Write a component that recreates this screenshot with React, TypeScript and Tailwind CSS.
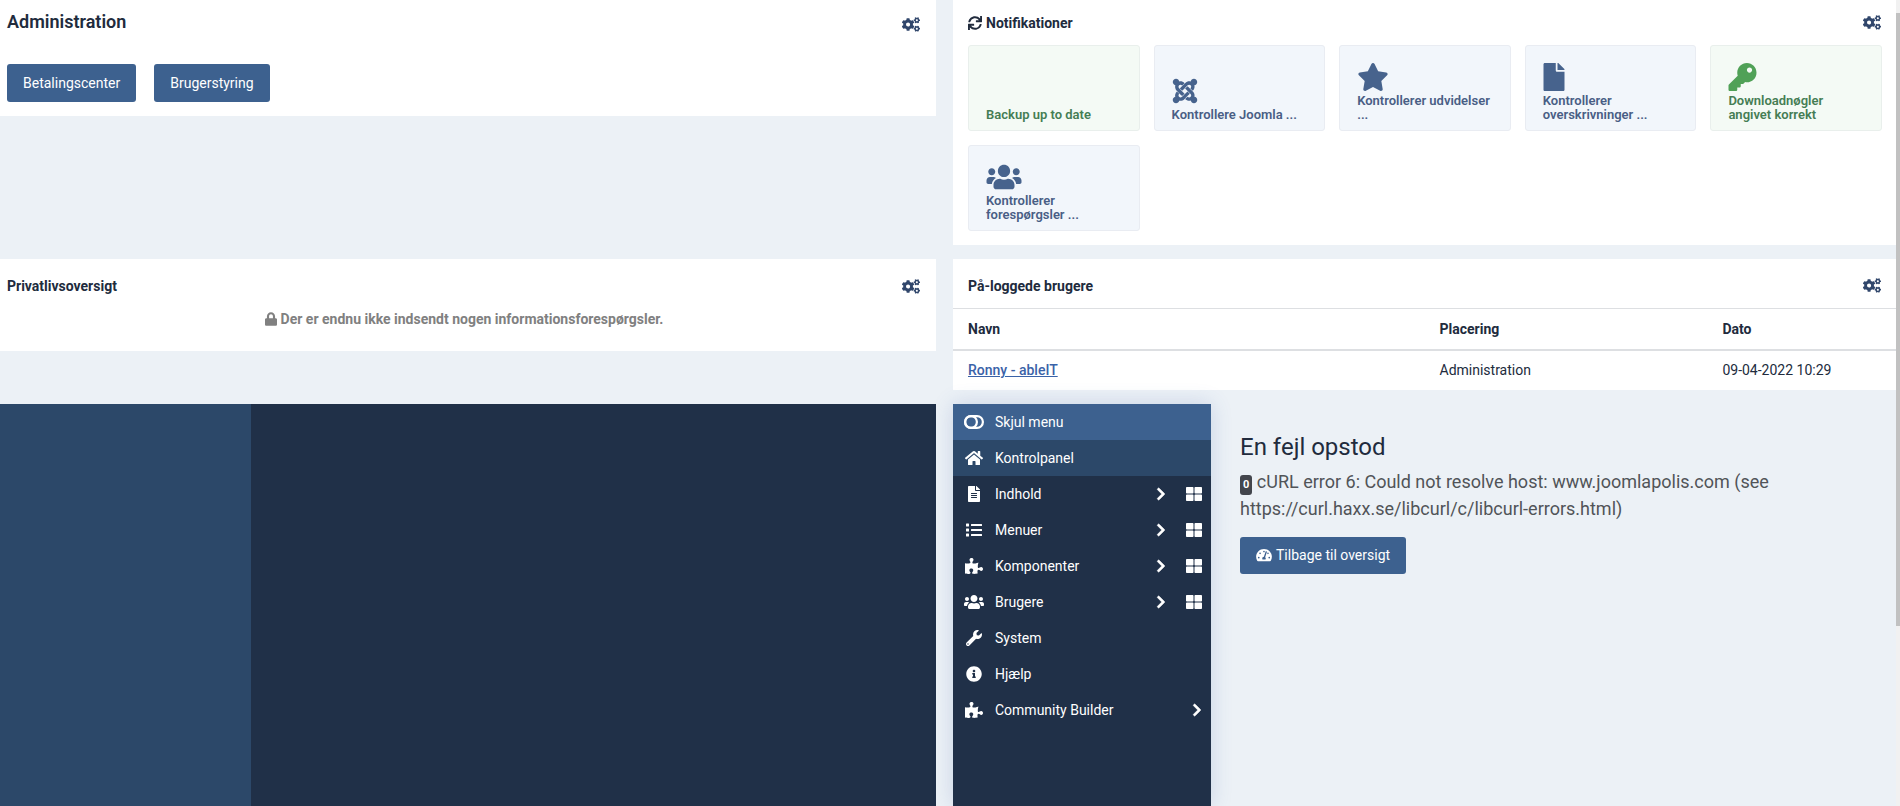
import React, { type ComponentType, type ReactNode } from "react";
import {
  FaChevronRight,
  FaCogs,
  FaFile,
  FaFileAlt,
  FaHome,
  FaInfoCircle,
  FaJoomla,
  FaKey,
  FaList,
  FaLock,
  FaPuzzlePiece,
  FaStar,
  FaSync,
  FaTachometerAlt,
  FaThLarge,
  FaUsers,
  FaWrench,
} from "react-icons/fa";

type Icon = ComponentType<{ className?: string }>;

function ToggleIcon({ className }: { className?: string }) {
  return (
    <svg viewBox="0 0 20 14" fill="none" stroke="currentColor" strokeWidth="2.2" className={className} aria-hidden="true">
      <rect x="1.1" y="1.1" width="17.8" height="11.8" rx="5.9" />
      <circle cx="7" cy="7" r="5.9" />
    </svg>
  );
}

function SettingsButton() {
  return (
    <button type="button" aria-label="Indstillinger" className="text-[#30466b]">
      <FaCogs className="h-[15px] w-[18px]" />
    </button>
  );
}

function Card({ className, children }: { className?: string; children: ReactNode }) {
  return <section className={`self-start bg-white ${className ?? ""}`}>{children}</section>;
}

type Tile = { label: string; icon?: Icon; size?: string; ok?: boolean };

const tiles: Tile[] = [
  { label: "Backup up to date", ok: true },
  { label: "Kontrollere Joomla ...", icon: FaJoomla, size: "h-7 w-[26px]" },
  { label: "Kontrollerer udvidelser ...", icon: FaStar, size: "h-7 w-8" },
  { label: "Kontrollerer overskrivninger ...", icon: FaFile, size: "h-7 w-[22px]" },
  { label: "Downloadnøgler angivet korrekt", icon: FaKey, size: "h-7 w-[29px]", ok: true },
  { label: "Kontrollerer forespørgsler ...", icon: FaUsers, size: "h-7 w-9" },
];

function NotificationTile({ label, icon: TileIcon, size, ok }: Tile) {
  return (
    <a
      href="#"
      className={`flex h-[86px] flex-col justify-end rounded-[3px] border px-[17px] pb-2 text-[13px] leading-[14px] font-semibold ${
        ok ? "border-[#e9efec] bg-[#f4faf5] text-[#457d54]" : "border-[#e9ecf2] bg-[#f2f6fb] text-[#495e85]"
      }`}
    >
      {TileIcon && <TileIcon className={`mb-[3px] ${size} ${ok ? "text-[#50a157]" : "text-[#47638d]"}`} />}
      <span>{label}</span>
    </a>
  );
}

type MenuEntry = { label: string; icon: Icon; size: string; arrow?: boolean; dashboard?: boolean; tone?: string };

const menu: MenuEntry[] = [
  { label: "Skjul menu", icon: ToggleIcon, size: "h-[14px] w-5", tone: "bg-[#3d618f]" },
  { label: "Kontrolpanel", icon: FaHome, size: "h-4 w-[18px]", tone: "bg-[#2c4869]" },
  { label: "Indhold", icon: FaFileAlt, size: "h-4 w-3", arrow: true, dashboard: true },
  { label: "Menuer", icon: FaList, size: "size-4", arrow: true, dashboard: true },
  { label: "Komponenter", icon: FaPuzzlePiece, size: "h-4 w-[18px]", arrow: true, dashboard: true },
  { label: "Brugere", icon: FaUsers, size: "h-4 w-5", arrow: true, dashboard: true },
  { label: "System", icon: FaWrench, size: "size-4" },
  { label: "Hjælp", icon: FaInfoCircle, size: "size-4" },
  { label: "Community Builder", icon: FaPuzzlePiece, size: "h-4 w-[18px]", arrow: true },
];

function Sidebar() {
  return (
    <nav className="w-[258px] shrink-0 bg-[#203048] text-sm text-white shadow-[0_0_20px_rgba(61,97,170,0.2)]">
      <ul>
        {menu.map(({ label, icon: ItemIcon, size, arrow, dashboard, tone }) => (
          <li key={label} className={`flex h-9 items-center pr-[9px] pl-[11px] ${tone ?? ""}`}>
            <a href="#" className="flex flex-1 items-center gap-[11px]">
              <span className="flex w-5 justify-center">
                <ItemIcon className={size} />
              </span>
              {label}
            </a>
            {arrow && <FaChevronRight className="h-[14px] w-[10px] stroke-current stroke-[24px]" />}
            {dashboard && (
              <a href="#" aria-label={`${label} oversigt`} className="ml-5">
                <FaThLarge className="size-4" />
              </a>
            )}
          </li>
        ))}
      </ul>
    </nav>
  );
}

export default function App() {
  return (
    <div className="flex h-screen overflow-hidden bg-[#ecf1f6] font-[Roboto,sans-serif] text-sm text-[#212b3d]">
      <main className="grid min-w-0 flex-1 grid-cols-[936fr_943fr] grid-rows-[auto_auto_1fr] gap-x-[17px] gap-y-[14px]">
        <Card className="pb-[14px]">
          <div className="flex h-16 items-start justify-between pt-[11px] pr-4 pl-[7px]">
            <h2 className="text-lg leading-[22px] font-semibold">Administration</h2>
            <div className="pt-[6px]">
              <SettingsButton />
            </div>
          </div>
          <div className="flex gap-[18px] pl-[7px]">
            <button type="button" className="h-[38px] rounded-[3px] bg-[#3d618f] px-4 text-white">
              Betalingscenter
            </button>
            <button type="button" className="h-[38px] rounded-[3px] bg-[#3d618f] px-4 text-white">
              Brugerstyring
            </button>
          </div>
        </Card>

        <Card className="pr-[14px] pb-[14px] pl-[15px]">
          <div className="flex h-[45px] items-center justify-between pr-px">
            <h2 className="flex items-center gap-1 font-bold">
              <FaSync className="size-[14px]" />
              Notifikationer
            </h2>
            <SettingsButton />
          </div>
          <div className="grid grid-cols-5 gap-[14px]">
            {tiles.map((tile) => (
              <NotificationTile key={tile.label} {...tile} />
            ))}
          </div>
        </Card>

        <Card>
          <div className="flex h-[50px] items-center justify-between pt-1 pr-4 pl-[7px]">
            <h2 className="font-bold">Privatlivsoversigt</h2>
            <SettingsButton />
          </div>
          <p className="flex h-[42px] items-start justify-center gap-1 pr-2 font-bold text-[#808080]">
            <FaLock className="mt-[3px] h-[14px] w-3" />
            Der er endnu ikke indsendt nogen informationsforespørgsler.
          </p>
        </Card>

        <Card>
          <div className="flex h-[49px] items-center justify-between px-[15px] pt-1">
            <h2 className="font-bold">På-loggede brugere</h2>
            <SettingsButton />
          </div>
          <table className="w-full table-fixed text-left">
            <thead>
              <tr className="h-[41px] border-y border-b-2 border-[#dddfe2]">
                <th className="w-1/2 px-[15px] font-bold">Navn</th>
                <th className="w-[30%] px-[15px] font-bold">Placering</th>
                <th className="w-1/5 px-[15px] font-bold">Dato</th>
              </tr>
            </thead>
            <tbody>
              <tr className="h-10">
                <th className="px-[15px] font-medium">
                  <a href="#" className="text-[#3a62a8] underline">
                    Ronny - ableIT
                  </a>
                </th>
                <td className="px-[15px]">Administration</td>
                <td className="px-[15px]">09-04-2022 10:29</td>
              </tr>
            </tbody>
          </table>
        </Card>

        <div className="flex bg-[#203048]">
          <div className="w-[251px] bg-[#2c4869]" />
        </div>

        <div className="flex">
          <Sidebar />
          <div className="flex-1 pt-7 pr-4 pl-[29px]">
            <h1 className="text-2xl leading-[30px]">En fejl opstod</h1>
            <p className="mt-[6px] max-w-[540px] text-lg leading-[27px] text-[#515458]">
              <span className="mt-1 inline-block rounded-[3px] bg-[#43464d] px-[3px] py-1 align-middle text-[11px] leading-3 font-bold text-white">
                0
              </span>{" "}
              cURL error 6: Could not resolve host: www.joomlapolis.com (see https://curl.haxx.se/libcurl/c/libcurl-errors.html)
            </p>
            <a
              href="#"
              className="mt-[15px] inline-flex h-[37px] items-center gap-1 rounded-[3px] bg-[#3d618f] px-4 text-white"
            >
              <FaTachometerAlt className="h-[14px] w-4" />
              Tilbage til oversigt
            </a>
          </div>
        </div>
      </main>

      <div className="flex w-1 flex-col bg-[#f1f1f1] pt-[13px]" aria-hidden="true">
        <div className="grow-[613] bg-[#c1c1c1]" />
        <div className="grow-[180]" />
      </div>
    </div>
  );
}
